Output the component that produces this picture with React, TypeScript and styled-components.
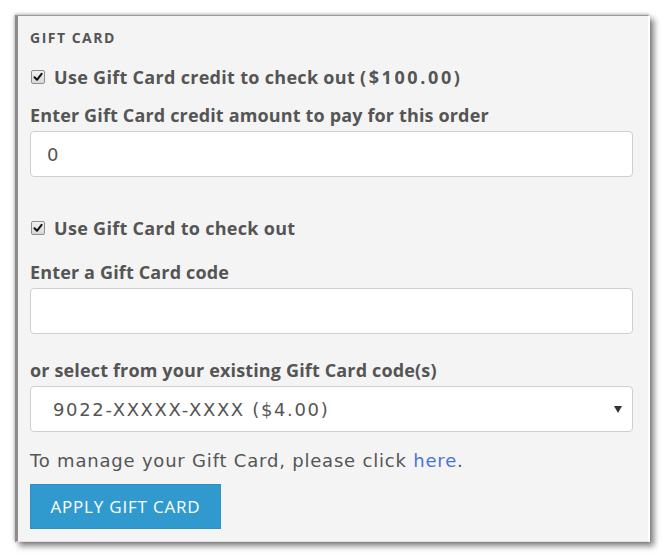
import React from "react";
import styled, { createGlobalStyle } from "styled-components";

const Global = createGlobalStyle`
  html, body { margin: 0; padding: 0; background: #ffffff; }
  * { box-sizing: border-box; }
`;

const Page = styled.div`
  width: 666px;
  height: 556px;
  padding: 15px 0 0 15px;
`;

const Panel = styled.div`
  width: 635px;
  height: 527px;
  background: #f4f4f4;
  border-top: 1px solid #9a9a9a;
  border-left: 3px solid #8c8c8c;
  border-right: 2px solid #ffffff;
  border-bottom: 1px solid #e0e0e0;
  box-shadow: 4px 4px 6px rgba(0, 0, 0, 0.5), -1px -1px 3px rgba(0, 0, 0, 0.25);
  padding: 12px 15px 0 12px;
  display: flex;
  flex-direction: column;
  font-family: "Open Sans", "Lato", sans-serif;
  color: #555555;
`;

const Heading = styled.div`
  font-size: 14px;
  line-height: 20px;
  font-weight: 700;
  text-transform: uppercase;
  color: #555555;
  letter-spacing: 1.5px;
`;

const CheckRow = styled.label<{ $top: number }>`
  display: flex;
  align-items: center;
  gap: 9px;
  margin-top: ${(p) => p.$top}px;
  height: 24px;
  padding-left: 1px;
`;

const Box = styled.span`
  width: 14px;
  height: 14px;
  border: 1px solid #8f8f8f;
  border-radius: 2px;
  background: linear-gradient(#f2f2f2, #d8d8d8);
  display: flex;
  align-items: center;
  justify-content: center;
`;

const LabelText = styled.span`
  font-size: 18px;
  line-height: 24px;
  font-weight: 700;
  color: #555555;
  letter-spacing: 0.3px;
`;

const Amount = styled.span`
  letter-spacing: 2.6px;
`;

const FieldLabel = styled.div<{ $top: number }>`
  margin-top: ${(p) => p.$top}px;
  font-size: 18px;
  line-height: 24px;
  font-weight: 700;
  color: #555555;
  letter-spacing: 0.15px;
`;

const Input = styled.div`
  margin-top: 4px;
  height: 46px;
  width: 603px;
  background: #ffffff;
  border: 1px solid #cfcfcf;
  border-radius: 4px;
  display: flex;
  align-items: center;
  padding: 0 16px;
  font-family: "DejaVu Sans", Verdana, sans-serif;
  font-size: 18px;
  color: #555555;
`;

const Select = styled(Input)`
  justify-content: space-between;
  padding: 0 10px 0 22px;
  letter-spacing: 1.65px;
`;

const Arrow = styled.span`
  width: 0;
  height: 0;
  border-left: 4px solid transparent;
  border-right: 4px solid transparent;
  border-top: 7px solid #333333;
`;

const Note = styled.div`
  margin-top: 17px;
  font-family: "DejaVu Sans", Verdana, sans-serif;
  font-size: 18px;
  line-height: 24px;
  letter-spacing: 0.8px;
  color: #555555;
`;

const Link = styled.a`
  color: #4a74d4;
  text-decoration: none;
`;

const Button = styled.button`
  margin-top: 11px;
  width: 191px;
  height: 45px;
  background: #3099cd;
  border: 1px solid #2f8fc0;
  border-radius: 0;
  color: #ffffff;
  font-family: "Open Sans", "Lato", sans-serif;
  font-size: 17px;
  font-weight: 400;
  letter-spacing: 0.8px;
  text-transform: uppercase;
  padding: 0;
`;

const Check = () => (
  <svg width="10" height="10" viewBox="0 0 10 10">
    <path d="M1.5 5.2 L4 7.8 L8.6 1.8" stroke="#111" strokeWidth="2" fill="none" strokeLinecap="round" strokeLinejoin="round" />
  </svg>
);

export default function App() {
  return (
    <>
      <Global />
      <Page>
        <Panel>
          <Heading>Gift Card</Heading>
          <CheckRow $top={17}>
            <Box><Check /></Box>
            <LabelText>
              Use Gift Card credit to check out <Amount>($100.00)</Amount>
            </LabelText>
          </CheckRow>
          <FieldLabel $top={14}>Enter Gift Card credit amount to pay for this order</FieldLabel>
          <Input>0</Input>
          <CheckRow $top={39}>
            <Box><Check /></Box>
            <LabelText>Use Gift Card to check out</LabelText>
          </CheckRow>
          <FieldLabel $top={20}>Enter a Gift Card code</FieldLabel>
          <Input />
          <FieldLabel $top={24}>or select from your existing Gift Card code(s)</FieldLabel>
          <Select>
            <span>9022-XXXXX-XXXX ($4.00)</span>
            <Arrow />
          </Select>
          <Note>
            To manage your Gift Card, please click <Link href="#">here</Link>.
          </Note>
          <Button>Apply Gift Card</Button>
        </Panel>
      </Page>
    </>
  );
}
